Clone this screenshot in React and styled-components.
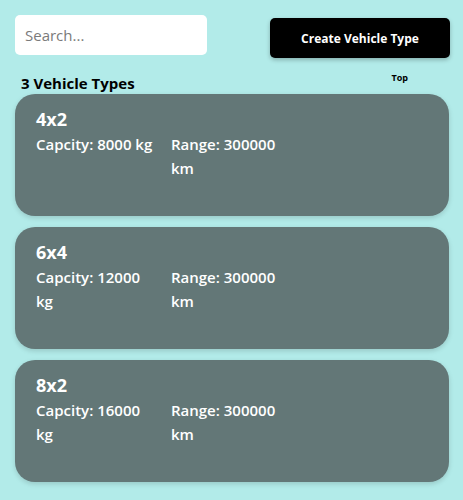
import React from "react";
import styled, { createGlobalStyle } from "styled-components";

const GlobalStyle = createGlobalStyle`
  body {
    margin: 0;
    background: #b2ebe9;
    font-family: "Open Sans", "Noto Sans", sans-serif;
  }
`;

const Page = styled.div`
  padding: 15px 14px 15px 15px;
`;

const Toolbar = styled.div`
  display: flex;
  justify-content: space-between;
  align-items: flex-start;
  margin-right: -1px;
`;

const SearchInput = styled.input`
  width: 192px;
  height: 40px;
  box-sizing: border-box;
  border: none;
  border-radius: 5px;
  padding: 0 10px;
  font-family: inherit;
  font-size: 15px;
  color: #333;
  background: #fff;
  outline: none;

  &::placeholder {
    color: #7a7a7a;
  }
`;

const CreateButton = styled.button`
  margin-top: 3px;
  width: 180px;
  height: 40px;
  border: none;
  border-radius: 5px;
  background: #000;
  color: #fff;
  font-family: inherit;
  font-weight: 700;
  font-size: 12px;
  box-shadow: 0 2px 4px rgba(0, 0, 0, 0.25);
  cursor: pointer;
`;

const Header = styled.div`
  display: flex;
  justify-content: space-between;
  align-items: flex-start;
  margin-top: 15px;
  padding: 0 41px 0 6px;
`;

const Count = styled.h2`
  margin: 0;
  font-size: 15px;
  font-weight: 700;
  line-height: 20px;
  color: #000;
`;

const TopLink = styled.a`
  font-size: 9px;
  font-weight: 700;
  color: #000;
  text-decoration: none;
  line-height: 12px;
  margin-top: -1px;
`;

const List = styled.div`
  display: flex;
  flex-direction: column;
  gap: 11px;
  margin-top: 1px;
`;

const Card = styled.div`
  height: 122px;
  box-sizing: border-box;
  background: #637777;
  border-radius: 20px;
  padding: 12px 21px;
  color: #fff;
  box-shadow: 0 2px 5px rgba(0, 0, 0, 0.15);
`;

const Title = styled.h3`
  margin: 0;
  font-size: 18px;
  font-weight: 700;
  line-height: 26px;
`;

const Specs = styled.div`
  display: grid;
  grid-template-columns: 120px 120px;
  column-gap: 15px;
`;

const Spec = styled.div`
  font-size: 15px;
  font-weight: 600;
  line-height: 24px;
`;

const vehicleTypes = [
  { name: "4x2", capacity: 8000, range: 300000 },
  { name: "6x4", capacity: 12000, range: 300000 },
  { name: "8x2", capacity: 16000, range: 300000 },
];

const App = () => (
  <>
    <GlobalStyle />
    <Page>
      <Toolbar>
        <SearchInput placeholder="Search..." />
        <CreateButton>Create Vehicle Type</CreateButton>
      </Toolbar>
      <Header>
        <Count>{vehicleTypes.length} Vehicle Types</Count>
        <TopLink href="#top">Top</TopLink>
      </Header>
      <List>
        {vehicleTypes.map((v) => (
          <Card key={v.name}>
            <Title>{v.name}</Title>
            <Specs>
              <Spec>Capcity: {v.capacity} kg</Spec>
              <Spec>Range: {v.range} km</Spec>
            </Specs>
          </Card>
        ))}
      </List>
    </Page>
  </>
);

export default App;
